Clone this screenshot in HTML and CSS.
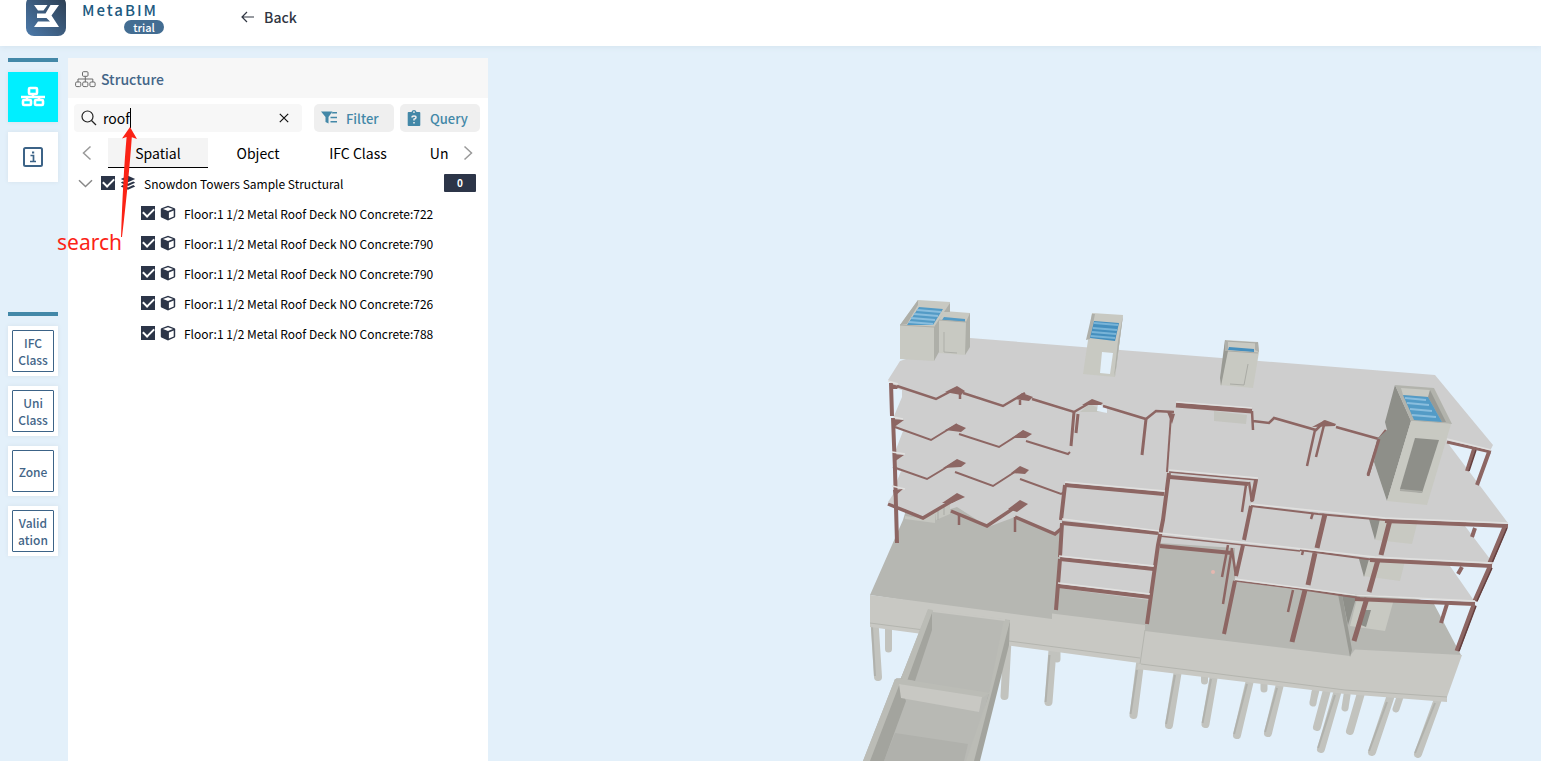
FILE: index.html
```html
<!DOCTYPE html>
<html lang="en">
<head>
<meta charset="utf-8">
<title>MetaBIM</title>
<link rel="stylesheet" href="styles.css">
</head>
<body>
<svg class="defs" aria-hidden="true">
  <symbol id="cube" viewBox="0 0 16 16"><path fill="#2c3548" fill-rule="evenodd" d="M8 .7 14.6 3.2Q15.2 3.5 15.2 4.1V11.6Q15.2 12.3 14.6 12.6L8 15.4 1.4 12.6Q.8 12.3.8 11.6V4.1Q.8 3.5 1.4 3.2ZM8 2.2 3 4.1 8 6.1 13 4.1ZM8.9 7.5V13.4L13.7 11.4V5.6Z"/></symbol>
  <symbol id="layers" viewBox="0 0 16 16"><path fill="#2c3548" d="M8 .8 15.2 4 8 7.2.8 4ZM2.7 6.4 8 8.7 13.3 6.4 15.2 7.7 8 10.9.8 7.7ZM2.7 10.1 8 12.4 13.3 10.1 15.2 11.5 8 14.8.8 11.5Z"/></symbol>
</svg>
<header class="topbar">
  <a class="brand" href="#">
    <svg class="logo" viewBox="0 4 40 36" aria-hidden="true">
      <defs><linearGradient id="lg" x1="1" y1="0" x2="0" y2="1"><stop offset="0" stop-color="#2c3d50"/><stop offset="1" stop-color="#4c7aab"/></linearGradient></defs>
      <rect width="40" height="40" rx="8" fill="url(#lg)"/>
      <path fill="#fff" d="M8 9H21.500L17.500 14.500H12ZM24.500 9H33L25.500 19.500 33 31H8L12 25.500H24L20.500 22H11V17.500H19.500Z"/>
    </svg>
    <span class="brand-text"><span class="brand-name">MetaBIM</span><span class="trial">trial</span></span>
  </a>
  <a class="back" href="#"><svg width="14" height="12" viewBox="0 0 14 12" fill="none" stroke="#303642" stroke-width="1.200" aria-hidden="true"><path d="M6 1 1 6 6 11M1 6H13"/></svg>Back</a>
</header>
<main class="workspace">
  <nav class="rail">
    <div class="rail-group">
      <span class="rule"></span>
      <button class="tile active" aria-label="Structure"><svg width="26" height="22" viewBox="0 0 26 22" fill="none" stroke="#fff" stroke-width="2.600" aria-hidden="true"><rect x="9" y="2" width="8" height="6" rx="1"/><path d="M13 8V11M1 11H25M7 11V13M19 11V13"/><rect x="3" y="14" width="8" height="5" rx="1"/><rect x="15" y="14" width="8" height="5" rx="1"/></svg></button>
      <button class="tile" aria-label="Information"><svg width="22" height="22" viewBox="0 0 22 22" fill="none" stroke="#3c6387" stroke-width="2" aria-hidden="true"><rect x="2" y="2" width="18" height="18" rx="1.500"/><path d="M8.500 9.500H11.500V15M8 15.500H14" stroke-width="1.700"/><path d="M10 6.500H12.200"/></svg></button>
    </div>
    <div class="rail-group">
      <span class="rule"></span>
      <button class="tile"><span class="label">IFC Class</span></button>
      <button class="tile"><span class="label">Uni Class</span></button>
      <button class="tile"><span class="label">Zone</span></button>
      <button class="tile"><span class="label">Valid<br>ation</span></button>
    </div>
  </nav>
  <section class="panel">
    <h1 class="panel-title"><svg width="21" height="17" viewBox="0 0 21 17" fill="none" stroke="#6a6a6a" aria-hidden="true"><rect x="7.500" y=".7" width="5.500" height="4.600" rx="1"/><path d="M10.300 5.500V11M3 11V8H17.800V11"/><rect x=".6" y="11" width="5.200" height="4.600" rx="1.200"/><rect x="7.700" y="11" width="5.200" height="4.600" rx="1.200"/><rect x="14.900" y="11" width="5.200" height="4.600" rx="1.200"/></svg>Structure</h1>
    <div class="tools">
      <div class="search">
        <svg width="16" height="16" viewBox="0 0 16 16" fill="none" stroke="#222" stroke-width="1.200" aria-hidden="true"><circle cx="6.500" cy="6.500" r="5.500"/><path d="M10.500 10.500 15 15"/></svg>
        <input type="text" value="roof" aria-label="Search"><span class="caret"></span>
        <button class="clear" aria-label="Clear"><svg width="10" height="10" viewBox="0 0 10 10" stroke="#111" stroke-width="1.200" aria-hidden="true"><path d="M.8.8 9.200 9.200M9.200.8.8 9.200"/></svg></button>
      </div>
      <button class="tool"><svg width="18" height="16" viewBox="0 0 18 16" fill="#4388a8" aria-hidden="true"><path d="M0 1.500H11.500L7.500 7V13.500L4.500 12V7ZM11.500 2H16V3.600H10.600ZM9.500 6.700H16V8.300H9.500ZM9.500 11H16V12.600H9.500Z"/></svg>Filter</button>
      <button class="tool query"><svg width="14" height="16" viewBox="0 0 14 16" aria-hidden="true"><path fill="#4388a8" fill-rule="evenodd" d="M1.500 2H4.500Q5 0 7 0T9.500 2H12.500Q13.300 2 13.300 3V15Q13.300 16 12.500 16H1.500Q.7 16 .7 15V3Q.7 2 1.500 2ZM7 1.200A.9.900 0 1 0 7 3 .9.900 0 1 0 7 1.200Z"/><path d="M5 7.500Q5 6 7 6T9 7.500Q9 8.700 7 9.300V10.600M7 12V13.500" fill="none" stroke="#eee" stroke-width="1.500"/></svg>Query</button>
    </div>
    <div class="tabs">
      <button class="step" aria-label="Previous tabs"><svg width="10" height="16" viewBox="0 0 10 16" fill="none" stroke="#999" stroke-width="1.500"><path d="M8.500 1.500 1.500 8 8.500 14.500"/></svg></button>
      <div class="tab-strip" role="tablist">
        <button class="tab selected" role="tab" aria-selected="true">Spatial</button>
        <button class="tab" role="tab">Object</button>
        <button class="tab" role="tab">IFC Class</button>
        <button class="tab" role="tab">UniClass</button>
      </div>
      <button class="step right" aria-label="Next tabs"><svg width="10" height="16" viewBox="0 0 10 16" fill="none" stroke="#999" stroke-width="1.500"><path d="M1.500 1.500 8.500 8 1.500 14.500"/></svg></button>
    </div>
    <ul class="tree">
      <li><div class="row root"><svg class="chevron" width="15" height="9" viewBox="0 0 15 9" fill="none" stroke="#888" stroke-width="1.500" aria-hidden="true"><path d="M1 1.200 7.500 7.500 14 1.200"/></svg><label><input type="checkbox" checked><svg class="glyph" aria-hidden="true"><use href="#layers"/></svg>Snowdon Towers Sample Structural</label><span class="count">0</span></div>
        <ul>
          <li class="row"><label><input type="checkbox" checked><svg class="glyph" aria-hidden="true"><use href="#cube"/></svg>Floor:1 1/2 Metal Roof Deck NO Concrete:722</label></li>
          <li class="row"><label><input type="checkbox" checked><svg class="glyph" aria-hidden="true"><use href="#cube"/></svg>Floor:1 1/2 Metal Roof Deck NO Concrete:790</label></li>
          <li class="row"><label><input type="checkbox" checked><svg class="glyph" aria-hidden="true"><use href="#cube"/></svg>Floor:1 1/2 Metal Roof Deck NO Concrete:790</label></li>
          <li class="row"><label><input type="checkbox" checked><svg class="glyph" aria-hidden="true"><use href="#cube"/></svg>Floor:1 1/2 Metal Roof Deck NO Concrete:726</label></li>
          <li class="row"><label><input type="checkbox" checked><svg class="glyph" aria-hidden="true"><use href="#cube"/></svg>Floor:1 1/2 Metal Roof Deck NO Concrete:788</label></li>
        </ul>
      </li>
    </ul>
    <div class="callout"><svg width="20" height="112" viewBox="0 0 20 112" aria-hidden="true"><path fill="#fb2316" d="M12 0 19 12 13.800 10.200Q11 50 4 110L3 110Q5 50 8.600 10L4 11.500Z"/></svg><span>search</span></div>
  </section>
  <section class="viewer">
    <svg viewBox="488 46 1053 715" preserveAspectRatio="xMaxYMin meet" role="img" aria-label="Structural model">
      <!-- piles -->
      <g stroke="#c2c3be" stroke-width="7" stroke-linecap="round">
        <path d="M888.500 620V649M1057 645V659M1204.500 675V681M1264 684V689M1315 692 1313 703M1347 695 1345 708M1400 697 1396 709M1316 690 1313 702"/>
        <path stroke-width="8" d="M874.500 622 878 677M1007.500 640 1004.500 696M1052.500 650 1048.500 702M1140 664 1133.500 715M1178 670 1169 725M1214 675 1205.500 724M1250 680 1237 735M1280 684 1268 733M1327 690 1317 727M1338 690 1321 749M1361 693 1350 731M1390 698 1372 752M1438 699 1418 754"/>
      </g>
      <g stroke="#a5a6a1" stroke-width="2" opacity=".6"><path d="M872 627 875 676M1049.500 655 1045.500 702M1137 670 1130.500 714M1175 675 1166 724M1211 679 1202.500 723M1247 684 1234 734M1277 688 1265 732M1335 695 1318 748M1387 702 1369 751M1435 703 1415 753"/></g>
      <!-- ground slab and walls -->
      <path fill="#b6b7b2" d="M870 595 903 520 912 490 1230 540 1434 604 1461 655 1350 660 1145 635 1050 622Z"/>
      <path fill="#c8c8c3" d="M870 595 1052 619V613.500L1145 625V631L1350 656 1355 649.500 1462 655 1447 697V702L1345 694 1137 669 1139 663 870 627Z"/>
      <path fill="none" stroke="#b4b5af" stroke-width="1" d="M870 623 1140 658M1141 664 1345 690 1447 697M1145 630 1140 664"/>
      <!-- ramp -->
      <path fill="#b8b9b4" d="M928 610 1010 620 999 660 973 761H863L895 679 901 678Z"/>
      <path fill="#b0b1ac" d="M895 733 968 744 964 761H884Z"/>
      <path fill="#a3a49e" d="M932 612V630L915 681 901 678ZM899 683 906 701 884 761H869ZM1010 620 1009 645 980 761H971L987 700Z"/>
      <path fill="#bbbcb6" d="M928 609 933 610 907 681 901 678ZM895 679 900 683 870 761H863ZM1004 619 1010 621 974 761H966L988 697ZM896 678 990 693 982 698 899 684Z"/>
      <path fill="#c8c8c3" d="M899 684 982 697 979 712 901 698Z"/>
      <path fill="none" stroke="#c8c8c3" stroke-width="2" d="M933 611 1005 620"/>
      <!-- floor slabs -->
      <path fill="#cecece" d="M888 380 900 361 970 338 1435 375 1493 445 1490 451 1447 440 1450 446 1508 523 1465 526 1493 563 1450 566 1475 602 1355 594 1235 582V548L1160 543 1150 600 1058 588 1062 530 1054 534 1015 517 988 527 957 507 922 518 888 502 896 490 894 420 892 384Z"/>
      <path fill="#e3f0fa" d="M891 387 902 390V397L894 416ZM894 428 903 431 895 452ZM895 470 901 471 895 486Z"/>
      <path fill="#c5c6c0" d="M905 516 920 518 935 511V523L905 519ZM935 510 950 503V514L936 520Z"/>
      <path fill="none" stroke="#a9aaa5" d="M938 511V520M944 506V515"/>
      <!-- rear core seen between floors -->
      <path fill="#c8c9c2" d="M1374 520H1418L1412 544 1376 540ZM1363 561H1405L1400 581 1363 576ZM1357 599H1394L1385 631 1350 626Z"/>
      <path fill="#8e8f89" d="M1369 519H1380L1375 540ZM1359 559H1369L1364 577ZM1342 595H1357L1348 625ZM1363 610H1371L1366 627 1361 625Z"/>
      <path fill="#999a94" d="M1338 594 1342 594 1352 650 1350 657Z"/>
      <!-- lower edges -->
      <path fill="#c4c5bf" d="M1080 412 1090 404 1108 413 1105 412ZM1214 411 1247 415 1246 424 1214 421Z"/>
      <path fill="#e3f0fa" d="M1098 404 1107 408V413L1097 411Z"/>
      <g fill="none" stroke="#8d6663" stroke-width="2.500">
        <path d="M891 383 892 416M893 418 895 470M895 470 897 543" stroke-width="4"/>
        <path d="M897 386 936 399 957 388M963 393 1003 406 1025 393M1032 399 1074 412 1093 401M1103 406 1146 419 1156 411 1174 412"/>
        <path stroke-width="2" d="M895 427 931 440 957 424M959 434 999 447 1024 431M1026 441 1068 454 1070 452"/>
        <path stroke-width="2" d="M893 467 927 479 957 461M955 472 993 486 1021 468M1020 479 1061 494 1064 492"/>
        <path stroke-width="3.500" d="M888 504 923 518 957 498M951 511 987 526 1020 504M1015 517 1055 534 1062 528"/>
        <path d="M960 394V399M1020 400V405M959 514V525M1015 517V532"/>
        <path stroke-width="3" d="M1074 412 1071 446M1078 414 1076 433M1146 419 1142 455"/>
        <path stroke-width="2" d="M1171 415 1167 472"/>
        <path stroke-width="5" d="M1176 405 1252 411"/><path d="M1252 411 1253 430M1253 421 1269 423 1274 418 1316 430 1325 421M1336 427 1379 439 1386 430M1315 430 1307 466M1325 421 1316 457M1379 439 1368 476"/>
        <path stroke-width="4" d="M1065 485 1164 494M1062 523 1158 533M1060 559 1154 569M1058 586 1150 597"/>
        <path stroke-width="4" d="M1065 485 1061 520M1062 523 1060 557M1060 559 1056 610M1169 473 1163 520 1158 545 1147 624"/>
        <path stroke-width="4" d="M1170 477 1248 484M1160 546 1232 553"/><path stroke-width="1.500" d="M1169 472 1258 480M1159 536 1300 551M1235 581 1300 589"/>
        <path d="M1246 485 1242 512M1249 482 1252 502M1228 545 1222 577M1232 548 1223 604M1232 550 1236 576"/>
        <path stroke-width="4" d="M1256 480 1252 501M1251 506 1244 540M1243 545 1236 576M1235 581 1224 634"/>
        <path stroke-width="2" d="M1251 506 1318 514 1385 520"/><path stroke-width="4" d="M1385 521 1508 526M1370 560 1492 566M1355 599 1475 604"/>
        <path stroke-width="2" d="M1300 550 1375 560M1300 589 1360 598"/>
        <path d="M1313 513 1311 519M1303 551 1302 555M1293 590 1288 612"/>
        <path stroke-width="5" d="M1325 514 1317 548M1315 553 1308 585M1305 590 1292 642M1390 520 1381 555M1378 560 1369 592M1367 598 1354 641"/>
        <path stroke-width="3" d="M1447 442 1491 452"/><path stroke-width="4" d="M1489 452 1477 485M1474 449 1467 471M1475 528 1472 537M1462 567 1458 574M1447 604 1441 623"/>
        <path stroke-width="5" d="M1505 527 1490 563M1490 567 1475 601M1474 605 1457 651"/>
      </g>
      <g fill="#8d6663"><path d="M891 384 899 386 897 389H891ZM945 392 957 386 965 391 961 395ZM1015 399 1022 393 1033 397 1029 401ZM1082 405 1092 399 1103 403 1101 405ZM892 419 904 420 893 428ZM945 430 957 424 966 428 961 432ZM1012 438 1023 430 1032 434 1026 438ZM893 454 904 455 894 462ZM943 468 957 459 966 463 961 467ZM1011 473 1020 466 1029 470 1025 474ZM893 490 903 489 894 497ZM942 503 957 493 965 497 952 503ZM1008 509 1020 500 1028 504 1017 512ZM1167 412 1175 414 1172 424ZM1312 427 1325 420 1336 424 1335 426Z"/></g>
      <g stroke="#643f3e" stroke-width="1.500"><path d="M1507 528 1492 563M1492 568 1477 601M1476 606 1459 651M1476 450 1469 471"/></g>
      <g fill="none" stroke="#e0e0df" stroke-width="1.500">
        <path d="M888 381 898 384M893 417 903 419M892 452 905 454M892 486 905 489M1065 482 1165 491M1062 519 1159 531M1059 556 1154 566M1058 583 1150 594M1169 470 1258 478M1159 533 1375 557 1493 563M1251 504 1385 518 1508 523M1235 579 1355 595 1475 601M1176 402 1252 408M1447 439 1491 450"/>
      </g>
      <!-- roof towers -->
      <path fill="#c8c9c2" d="M900 325 918 300 950 302 949 315 934 361 900 359ZM939 319 944 311 970 313V347L965 355 939 353Z"/>
      <path fill="#aeafa8" d="M900 325 918 300V305L907 324ZM934 327 950 303V312H944L939 320V352L934 361ZM966 322 970 313V347L965 355ZM1117 341 1123 315 1115 377Z"/>
      <path fill="#539bc6" d="M907 325 919 307 943 309 933 325ZM942 320 944 317 965 319V322Z"/>
      <path fill="none" stroke="#8abede" stroke-width="2" d="M917 310 941 312M914 314 938 316M911 318 935 320M909 322 933 324"/>
      <path fill="none" stroke="#aeafa9" d="M900 325 934 327M939 320 966 322M944 332V352L957 353M935 340V356L938 350V335"/>
      <path fill="#c8c9c2" d="M1092 313 1123 315 1115 377 1083 374Z"/>
      <path fill="#aeafa9" d="M1118 341 1123 315 1116 368 1114 377ZM1092 314 1095 314 1090 339 1086 340Z"/>
      <path fill="#458fbe" d="M1094 321 1119 323 1115 341 1090 338Z"/><path fill="none" stroke="#78b4d8" stroke-width="2" d="M1094 323 1118 325M1093 328 1117 330M1092 332 1116 334M1091 336 1115 338"/>
      <path fill="#e3f0fa" d="M1102 352 1113 353 1110 374 1100 373Z"/>
      <path fill="#c8c9c2" d="M1225 340 1258 342 1259 352 1253 388 1220 385Z"/>
      <path fill="#999a94" d="M1225 340 1228 351 1221 386 1220 378Z"/><path fill="#afb0aa" d="M1225 340 1228 342V351H1225ZM1255 343 1258 342 1259 352 1255 350Z"/>
      <path fill="#458fbe" d="M1229 347 1254 349V352L1228 350Z"/>
      <path fill="none" stroke="#aaaba5" d="M1228 351 1258 353M1248 364 1244 385 1230 384M1225 341 1258 343"/>
      <!-- main stair core -->
      <path fill="#8e8f89" d="M1395 385 1411 421 1387 501 1374 462 1377 439 1387 430 1385 422Z"/>
      <path fill="#b2b3ac" d="M1395 385 1434 388 1452 424 1411 421Z"/>
      <path fill="#c8c9c2" d="M1411 421 1451 424 1427 505 1387 501ZM1401 388 1430 390 1429 397 1403 395Z"/>
      <path fill="#999a94" d="M1430 390 1446 422H1442L1428 397Z"/>
      <path fill="#539bc6" d="M1403 395 1428 397 1442 422 1414 420Z"/><path fill="none" stroke="#8abede" stroke-width="2" d="M1405 398 1426 400M1407 403 1429 405M1410 409 1432 411M1412 415 1436 417"/>
      <path fill="#8e8f89" d="M1415 438 1439 440 1422 493 1400 489Z"/><path fill="none" stroke="#aaaba5" stroke-width="2" d="M1400 490 1422 492"/>
      <path stroke="#8d6663" stroke-width="3" d="M1379 439 1368 475"/>
      <circle cx="1213" cy="572" r="2" fill="#e5b8b0"/>
    </svg>
  </section>
</main>
</body>
</html>
```
FILE: styles.css
```css
* { box-sizing: border-box; }
body {
  margin: 0;
  height: 100vh;
  display: flex;
  flex-direction: column;
  overflow: hidden;
  background: #e3f0fa;
  color: #000;
  font-family: "Noto Sans CJK SC", "Noto Sans", sans-serif;
  font-size: 14px;
}
button, input { font: inherit; color: inherit; border: 0; padding: 0; margin: 0; background: none; }
a { color: inherit; text-decoration: none; }
ul { list-style: none; margin: 0; padding: 0; }
svg { display: block; flex: none; }
.defs { position: absolute; width: 0; height: 0; }

.topbar {
  flex: none;
  display: flex;
  align-items: flex-start;
  gap: 83px;
  height: 46px;
  padding-left: 26px;
  background: #fff;
  box-shadow: 0 1px 6px #d3e2ee;
}
.brand { display: flex; gap: 16px; }
.logo { width: 40px; height: 36px; }
.brand-text { display: flex; flex-direction: column; }
.brand-name { font-size: 15px; line-height: 20px; font-weight: 500; letter-spacing: 2px; color: #1d5a80; }
.trial {
  align-self: flex-end;
  width: 40px;
  margin-right: -6px;
  border-radius: 7px;
  background: #436d92;
  color: #fff;
  font-size: 11px;
  font-weight: 500;
  line-height: 14px;
  text-align: center;
}
.back { display: flex; align-items: center; gap: 9px; height: 33px; font-size: 14px; font-weight: 500; color: #303642; }

.workspace { flex: 1; display: flex; min-height: 0; }
.rail { flex: none; padding: 12px 10px 0 8px; display: flex; flex-direction: column; gap: 130px; }
.rail-group { display: flex; flex-direction: column; gap: 10px; }
.rule { height: 4px; background: #4388a8; }
.tile { width: 50px; height: 50px; padding: 4px; display: grid; place-items: center; background: #fff; box-shadow: 0 0 4px #d5e2eb; }
.tile.active { background: #00efff; }
.label {
  width: 42px;
  height: 42px;
  padding: 0 5px;
  display: grid;
  place-content: center;
  border: 1px solid #3c6387;
  border-radius: 1px;
  color: #436587;
  font-size: 12px;
  font-weight: 500;
  line-height: 17px;
}

.panel { position: relative; flex: none; width: 420px; margin-top: 12px; background: #fff; }
.panel-title {
  display: flex;
  align-items: center;
  gap: 5px;
  height: 40px;
  margin: 0;
  padding: 2px 7px 0;
  background: #f7f7f7;
  color: #436587;
  font-size: 14px;
  font-weight: 500;
}
.tools { display: flex; gap: 6px; padding: 6px 8px 6px 6px; }
.search {
  position: relative;
  flex: 1;
  display: flex;
  align-items: center;
  gap: 6px;
  height: 28px;
  margin-right: 6px;
  padding: 0 13px 0 7px;
  border-radius: 4px;
  background: #f7f7f7;
}
.search input { flex: 1; min-width: 0; height: 28px; outline: 0; font-size: 14px; }
.caret { position: absolute; left: 56px; top: 4px; width: 1px; height: 20px; background: #000; }
.tool {
  width: 80px;
  height: 28px;
  display: flex;
  align-items: center;
  gap: 7px;
  padding-left: 7px;
  border-radius: 5px;
  background: #efefef;
  color: #4388a8;
  font-size: 13px;
  font-weight: 500;
}
.tool.query { gap: 9px; }

.tabs { display: flex; height: 30px; }
.step { width: 40px; padding-right: 3px; display: grid; place-items: center; }
.step.right { padding-right: 0; }
.tab-strip { flex: 1; display: flex; overflow: hidden; }
.tab { flex: none; width: 100px; height: 30px; border-bottom: 1px solid transparent; }
.tab.selected { background: #f4f4f4; border-color: #000; }

.row { display: flex; align-items: center; height: 30px; padding-left: 73px; font-size: 12px; }
.row.root { padding: 0 12px 0 10px; gap: 8px; }
.row label { display: flex; align-items: center; flex: 1; }
.row input {
  appearance: none;
  width: 14px;
  height: 14px;
  background: #2c3548;
  display: grid;
  place-items: center;
}
.row input:checked::after {
  content: "";
  width: 9px;
  height: 5px;
  margin-bottom: 3px;
  border: solid #fff;
  border-width: 0 0 2px 2px;
  rotate: -45deg;
}
.glyph { width: 16px; height: 16px; margin: 0 8px 0 5px; }
.count { width: 32px; height: 18px; border-radius: 1px; background: #2c3548; color: #fff; font-size: 10px; font-weight: 700; line-height: 18px; text-align: center; }

.callout { position: absolute; left: -11px; top: 69px; width: 81px; display: flex; flex-direction: column; color: #fb2316; font: 21px/26px "Noto Sans", sans-serif; pointer-events: none; }
.callout svg { align-self: flex-end; margin-bottom: -10px; }

.viewer { flex: 1; min-width: 0; }
.viewer svg { width: 100%; height: 100%; }
```
